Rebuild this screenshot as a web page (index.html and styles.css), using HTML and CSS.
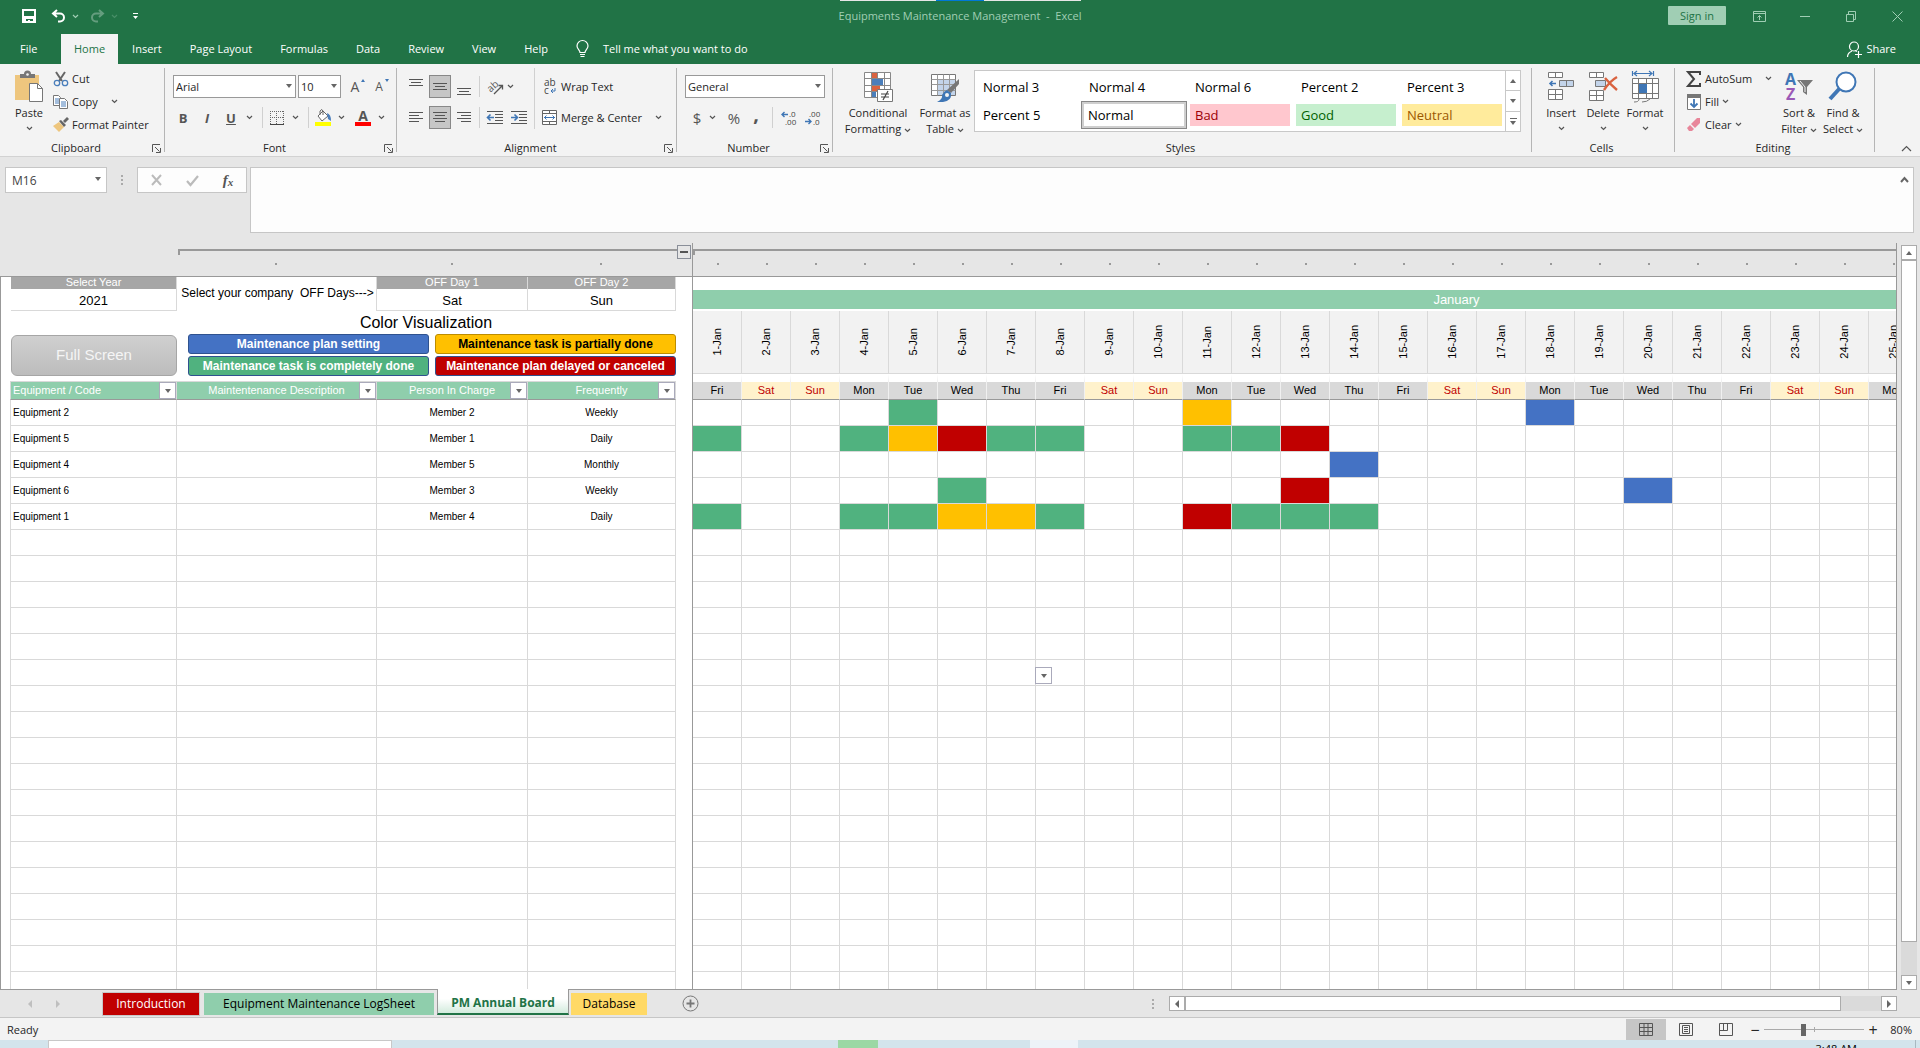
FILE: index.html
```html
<!DOCTYPE html>
<html lang="en">
<head>
    <meta charset="UTF-8">
    <title>Equipments Maintenance Management - Excel</title>
    <link rel="stylesheet" href="styles.css">
</head>
<body>
    <!-- shared symbols -->
    <svg class="sprite">
        <symbol id="chev" viewBox="0 0 7 5"><path d="M1 1l2.5 2.5L6 1" fill="none" stroke="currentColor" stroke-width="1.2"/></symbol>
        <symbol id="launch" viewBox="0 0 9 9"><path d="M.5 8V.5H8M3 3l4.5 4.5M8.5 4v4.500H4" fill="none" stroke="#555"/></symbol>
    </svg>

    <!-- title bar -->
    <header class="titlebar">
        <div class="quick">
            <button aria-label="Save"><svg width="14" height="14" viewBox="0 0 14 14"><path d="M1 1h12v12H1z" fill="none" stroke="#fff" stroke-width="2"/><path d="M1 7h12v6h-2v-3H4v3H1z" fill="#fff"/><path d="M6 11h2v3H6z" fill="#fff"/></svg></button>
            <button class="undo" aria-label="Undo"><svg width="15" height="14" viewBox="0 0 15 14"><path d="M6 1L2 4.500 6 8M2.500 4.500H9a4 4 0 010 8H7" fill="none" stroke="#fff" stroke-width="2"/></svg></button>
            <button class="drop" aria-label="Undo list"><svg class="chev"><use href="#chev"/></svg></button>
            <button class="undo dim" aria-label="Redo"><svg width="15" height="14" viewBox="0 0 15 14"><path d="M9 1l4 3.500L9 8M12.500 4.500H6a4 4 0 000 8h2" fill="none" stroke="#fff" stroke-width="2"/></svg></button>
            <button class="drop dim" aria-label="Redo list"><svg class="chev"><use href="#chev"/></svg></button>
            <button class="custom" aria-label="Customize"><svg width="5" height="6" viewBox="0 0 5 6"><path d="M0 0h5v1H0zM0 3h5L2.500 6z" fill="#fff"/></svg></button>
        </div>
        <div class="doc-title">Equipments Maintenance Management&nbsp; -&nbsp; Excel</div>
        <div class="window-buttons">
            <button class="sign-in">Sign in</button>
            <button aria-label="Ribbon display"><svg width="13" height="11" viewBox="0 0 13 11"><path d="M.5.5h12v10H.5zM.5 2.500h12M6.500 9V4.500M4.500 6.500l2-2 2 2" fill="none" stroke="#a0ceb4"/></svg></button>
            <button aria-label="Minimize"><svg width="10" height="11" viewBox="0 0 10 11"><path d="M0 5.500h10" stroke="#a0ceb4"/></svg></button>
            <button aria-label="Restore"><svg width="10" height="11" viewBox="0 0 10 11"><path d="M.5 3.500h7v7h-7zM2.500 3V.5h7v8H8" fill="none" stroke="#a0ceb4"/></svg></button>
            <button aria-label="Close"><svg width="11" height="11" viewBox="0 0 11 11"><path d="M.5.5l10 10M10.500.5l-10 10" stroke="#a0ceb4"/></svg></button>
        </div>
        <div class="top-strip"><i></i></div>
    </header>

    <nav class="tabs">
        <a href="#" class="file">File</a>
        <a href="#" class="active">Home</a>
        <a href="#">Insert</a>
        <a href="#">Page Layout</a>
        <a href="#">Formulas</a>
        <a href="#">Data</a>
        <a href="#">Review</a>
        <a href="#">View</a>
        <a href="#">Help</a>
        <a href="#" class="tell">
            <svg width="13" height="18" viewBox="0 0 13 18"><path d="M4 12.500C4 10 1 9 1 6a5.500 5.500 0 0111 0c0 3-3 4-3 6.500zM4 14.500h5M4.500 16.500h4" fill="none" stroke="#fff" stroke-width="1.2"/></svg>
            Tell me what you want to do
        </a>
        <a href="#" class="share">
            <svg width="15" height="17" viewBox="0 0 15 17"><circle cx="7" cy="5.500" r="4.500" fill="none" stroke="#fff" stroke-width="1.2"/><path d="M.5 16c0-3 2-5 4.500-6M8 9.500l2 1M8 13.500h7M11.500 10v7" fill="none" stroke="#fff" stroke-width="1.2"/></svg>
            Share
        </a>
    </nav>

    <!-- ribbon -->
    <section class="ribbon">
        <div class="group clipboard">
            <div class="tools">
                <button class="big">
                    <svg width="30" height="32" viewBox="0 0 30 32"><path d="M1 4h24v25H1z" fill="#eec67e"/><path d="M6 7V3h4a3.500 3.500 0 017 0h4v4z" fill="#777"/><circle cx="13.500" cy="3.500" r="1.300" fill="#f3f3f3"/><path d="M15.500 12.500h8l5 5v13h-13z" fill="#fff" stroke="#777"/><path d="M23.500 12.500v5h5" fill="none" stroke="#777"/></svg>
                    <span>Paste</span>
                    <svg class="chev"><use href="#chev"/></svg>
                </button>
                <div class="stack">
                    <button><svg width="16" height="16" viewBox="0 0 16 16"><path d="M3 1l6 9M12 1L6 10" stroke="#666" stroke-width="2"/><circle cx="4" cy="12" r="2.700" fill="none" stroke="#4a7ebb" stroke-width="1.300"/><circle cx="12" cy="12" r="2.700" fill="none" stroke="#4a7ebb" stroke-width="1.300"/></svg>Cut</button>
                    <button><svg width="16" height="16" viewBox="0 0 16 16"><path d="M.5 1.500h5l2 2v8h-7z" fill="#fff" stroke="#777"/><path d="M2 5h4M2 7h4M2 9h4" stroke="#4a7ebb"/><path d="M6.500 4.500h5l3 3v7h-8z" fill="#fff" stroke="#777"/><path d="M8 8h5M8 10h5M8 12h5" stroke="#4a7ebb"/></svg>Copy<svg class="chev spaced"><use href="#chev"/></svg></button>
                    <button><svg width="16" height="16" viewBox="0 0 16 16"><path d="M0 9l6-4 5 5-5 5z" fill="#eec67e"/><path d="M6 4l2-1 5 5-2 2zM10 4l4-4 2 2-4 4z" fill="#666"/></svg>Format Painter</button>
                </div>
            </div>
            <div class="caption"><span>Clipboard</span><svg class="launch"><use href="#launch"/></svg></div>
        </div>

        <div class="group font">
            <div class="tools rows">
                <div class="row">
                    <label class="combo font-name"><select aria-label="Font"><option>Arial</option></select></label>
                    <label class="combo font-size"><select aria-label="Font size"><option>10</option></select></label>
                    <button class="icon" aria-label="Increase font size"><span class="grow">A</span><i class="tri up"></i></button>
                    <button class="icon" aria-label="Decrease font size"><span class="shrink">A</span><i class="tri"></i></button>
                </div>
                <div class="row text-style">
                    <button class="icon bold">B</button>
                    <button class="icon italic">I</button>
                    <button class="icon under">U</button>
                    <svg class="chev"><use href="#chev"/></svg>
                    <i class="sep"></i>
                    <button class="icon" aria-label="Borders"><svg width="14" height="14" viewBox="0 0 14 14"><path d="M0 .5h14M0 6.500h14M.5 0v13M6.500 0v13M13.500 0v13" stroke="#666" stroke-dasharray="1 1"/><path d="M0 13.500h14" stroke="#444"/></svg></button>
                    <svg class="chev"><use href="#chev"/></svg>
                    <i class="sep"></i>
                    <button class="icon" aria-label="Fill color"><svg width="17" height="17" viewBox="0 0 17 17"><path d="M8 2l5 5-6 5-4-5z" fill="#fff" stroke="#666"/><path d="M5 6V2q2-3 3 0v4" fill="none" stroke="#666"/><path d="M12 4q4 1 4 8l-3-2z" fill="#4a7ebb"/><path d="M0 13h16v4H0z" fill="#ff0"/></svg></button>
                    <svg class="chev"><use href="#chev"/></svg>
                    <button class="icon font-color" aria-label="Font color">A</button>
                    <svg class="chev"><use href="#chev"/></svg>
                </div>
            </div>
            <div class="caption"><span>Font</span><svg class="launch"><use href="#launch"/></svg></div>
        </div>

        <div class="group align">
            <div class="tools">
                <div class="rows">
                    <div class="row">
                        <button class="toggle" aria-label="Top align"><svg width="14" height="16" viewBox="0 0 14 16"><path d="M0 .5h14M2 3.500h10M0 6.500h14" stroke="#555"/></svg></button>
                        <button class="toggle on" aria-label="Middle align"><svg width="14" height="16" viewBox="0 0 14 16"><path d="M0 4.500h14M2 7.500h10M0 10.500h14" stroke="#555"/></svg></button>
                        <button class="toggle" aria-label="Bottom align"><svg width="14" height="16" viewBox="0 0 14 16"><path d="M0 9.500h14M2 12.500h10M0 15.500h14" stroke="#555"/></svg></button>
                        <i class="sep"></i>
                        <button class="icon" aria-label="Orientation"><svg width="17" height="16" viewBox="0 0 17 16"><text x="1" y="11" font-size="10" fill="#555" transform="rotate(-42 6 9)">ab</text><path d="M7 15l8-8M11.500 6.500h4v4" fill="none" stroke="#555" stroke-width="1.300"/></svg></button>
                        <svg class="chev"><use href="#chev"/></svg>
                    </div>
                    <div class="row">
                        <button class="toggle" aria-label="Align left"><svg width="14" height="12" viewBox="0 0 14 12"><path d="M0 .5h14M0 3.500h10M0 6.500h14M0 9.500h10" stroke="#555"/></svg></button>
                        <button class="toggle on" aria-label="Center"><svg width="14" height="12" viewBox="0 0 14 12"><path d="M0 .5h14M2 3.500h10M0 6.500h14M2 9.500h10" stroke="#555"/></svg></button>
                        <button class="toggle" aria-label="Align right"><svg width="14" height="12" viewBox="0 0 14 12"><path d="M0 .5h14M4 3.500h10M0 6.500h14M4 9.500h10" stroke="#555"/></svg></button>
                        <i class="sep"></i>
                        <button class="icon" aria-label="Decrease indent"><svg width="16" height="14" viewBox="0 0 16 14"><path d="M0 .5h16M8 3.500h8M8 6.500h8M8 9.500h8M0 12.500h16" stroke="#555"/><path d="M7 6.500H1M3.500 3.500l-3 3 3 3" fill="none" stroke="#3f76b5" stroke-width="1.600"/></svg></button>
                        <button class="icon" aria-label="Increase indent"><svg width="16" height="14" viewBox="0 0 16 14"><path d="M0 .5h16M8 3.500h8M8 6.500h8M8 9.500h8M0 12.500h16" stroke="#555"/><path d="M0 6.500h6M3.500 3.500l3 3-3 3" fill="none" stroke="#3f76b5" stroke-width="1.600"/></svg></button>
                    </div>
                </div>
                <div class="rows wide">
                    <button class="row"><svg width="16" height="16" viewBox="0 0 16 16"><text x="2" y="7" font-size="10" fill="#444">ab</text><text x="2" y="15" font-size="10" fill="#444">c</text><path d="M13 9v3H9M11 10l-2 2 2 2" fill="none" stroke="#3f76b5"/></svg>Wrap Text</button>
                    <button class="row"><svg width="16" height="16" viewBox="0 0 16 16"><path d="M.5.5h14v14H.5zM.5 3.500h14M.5 11.500h14M7.500.5v3M7.500 11.500v3" fill="#fff" stroke="#666"/><path d="M2 7.500h11M4.500 5.500l-2 2 2 2M10.500 5.500l2 2-2 2" fill="none" stroke="#3f76b5"/></svg>Merge &amp; Center<svg class="chev spaced"><use href="#chev"/></svg></button>
                </div>
            </div>
            <div class="caption"><span>Alignment</span><svg class="launch"><use href="#launch"/></svg></div>
        </div>

        <div class="group number">
            <div class="tools rows">
                <div class="row"><label class="combo format"><select aria-label="Number format"><option>General</option></select></label></div>
                <div class="row">
                    <button class="icon symbol">$</button>
                    <svg class="chev"><use href="#chev"/></svg>
                    <button class="icon symbol">%</button>
                    <button class="icon symbol comma">,</button>
                    <i class="sep"></i>
                    <button class="icon" aria-label="Increase decimal"><svg width="16" height="14" viewBox="0 0 16 14"><text x="8" y="6" font-size="8" fill="#444">.0</text><text x="4" y="14" font-size="8" fill="#444">.00</text><path d="M7 3.500H1M3.500 1L1 3.500 3.500 6" fill="none" stroke="#3f76b5" stroke-width="1.400"/></svg></button>
                    <button class="icon" aria-label="Decrease decimal"><svg width="16" height="14" viewBox="0 0 16 14"><text x="4" y="6" font-size="8" fill="#444">.00</text><text x="8" y="14" font-size="8" fill="#444">.0</text><path d="M0 10.500h6M3.500 8L6 10.500 3.500 13" fill="none" stroke="#3f76b5" stroke-width="1.400"/></svg></button>
                </div>
            </div>
            <div class="caption"><span>Number</span><svg class="launch"><use href="#launch"/></svg></div>
        </div>

        <div class="group styles">
            <div class="tools">
                <button class="big cond">
                    <svg width="30" height="32" viewBox="0 0 30 32"><path d="M1.500 1.500h26v25h-26zM1.500 7.500h26M1.500 14.500h26M1.500 20.500h26M8.500 1.500v25M14.500 1.500v25M21.500 1.500v25" fill="#fff" stroke="#888"/><path d="M9 2h5v5H9zM9 15h8v5H9z" fill="#d9623f"/><path d="M9 8h11v6H9zM9 21h4v5H9z" fill="#4a7ebb"/><path d="M14.500 18.500h15v12h-15z" fill="#fff" stroke="#777"/><path d="M18 23h8M18 26h8M25 20l-5 9" stroke="#444" stroke-width="1.2"/></svg>
                    <span>Conditional</span>
                    <span>Formatting <svg class="chev"><use href="#chev"/></svg></span>
                </button>
                <button class="big fmt">
                    <svg width="30" height="32" viewBox="0 0 30 32"><path d="M1.500 3.500h24v21h-24z" fill="#fff" stroke="#777"/><path d="M8 9h17v15H8z" fill="#c3d4ea"/><path d="M1.500 8.500h24M1.500 13.500h24M1.500 19.500h24M7.500 3.500v21M13.500 3.500v21M19.500 3.500v21" stroke="#999"/><path d="M29 8v5l-8 9-4-3z" fill="#777"/><path d="M17 19l4 3q1 8-8 9H7q6-3 5-7 2-4 5-5z" fill="#3f76b5"/><circle cx="17" cy="24" r="2" fill="#f3f3f3"/></svg>
                    <span>Format as</span>
                    <span>Table <svg class="chev"><use href="#chev"/></svg></span>
                </button>
                <div class="gallery">
                    <div class="swatches">
                        <button>Normal 3</button><button>Normal 4</button><button>Normal 6</button><button>Percent 2</button><button>Percent 3</button>
                        <button>Percent 5</button><button class="current">Normal</button><button class="bad">Bad</button><button class="good">Good</button><button class="neutral">Neutral</button>
                    </div>
                    <div class="gallery-nav">
                        <button aria-label="Previous"><i class="tri up"></i></button>
                        <button aria-label="Next"><i class="tri"></i></button>
                        <button class="more" aria-label="More"><i class="tri"></i></button>
                    </div>
                </div>
            </div>
            <div class="caption"><span>Styles</span></div>
        </div>

        <div class="group cells">
            <div class="tools">
                <button class="big">
                    <svg width="28" height="32" viewBox="0 0 28 32"><path d="M1.500 1.500h14v5h-14zM8.500 1.500v5M1.500 18.500h14v10h-14zM8.500 18.500v10M1.500 23.500h14" fill="#fff" stroke="#777"/><path d="M12.500 9.500h14v6h-14zM19.500 9.500v6" fill="#c3d4ea" stroke="#777"/><path d="M9 12.500H3M5.500 10L3 12.500 5.500 15" fill="none" stroke="#3f76b5" stroke-width="1.600"/></svg>
                    <span>Insert</span><svg class="chev"><use href="#chev"/></svg>
                </button>
                <button class="big">
                    <svg width="30" height="32" viewBox="0 0 30 32"><path d="M1.500 1.500h14v5h-14zM8.500 1.500v5M1.500 19.500h14v10h-14zM8.500 19.500v10M1.500 24.500h14" fill="#fff" stroke="#777"/><path d="M7.500 9.500h10v6h-10z" fill="#c3d4ea" stroke="#777"/><path d="M17 7q5 6 12 12M29 6q-7 4-13 13" fill="none" stroke="#d9623f" stroke-width="2.400"/></svg>
                    <span>Delete</span><svg class="chev"><use href="#chev"/></svg>
                </button>
                <button class="big">
                    <svg width="28" height="32" viewBox="0 0 28 32"><path d="M1.500 7.500h26v20h-26zM7.500 7.500v20M15.500 7.500v20M21.500 7.500v20M1.500 12.500h26M1.500 22.500h26M3 31q5 0 5-3M11 31q5 0 8-3" fill="#fff" stroke="#777"/><path d="M8 13h8v9H8z" fill="#3f76b5"/><path d="M1.500 0v5M22.500 0v5M3 2.500h18M6 0L3 2.500 6 5M18 0l3 2.500L18 5" fill="none" stroke="#3f76b5" stroke-width="1.2"/></svg>
                    <span>Format</span><svg class="chev"><use href="#chev"/></svg>
                </button>
            </div>
            <div class="caption"><span>Cells</span></div>
        </div>

        <div class="group editing">
            <div class="tools">
                <div class="stack">
                    <button><svg width="16" height="16" viewBox="0 0 16 16"><path d="M14 4V1H2l6 7-6 7h12v-3" fill="none" stroke="#444" stroke-width="2"/></svg>AutoSum<svg class="chev spaced"><use href="#chev"/></svg></button>
                    <button><svg width="16" height="16" viewBox="0 0 16 16"><path d="M1.500.5h13v15h-13z" fill="#fff" stroke="#777"/><path d="M1 0h14v4H1z" fill="#777"/><path d="M8 5v8M4.500 9.500L8 13l3.500-3.500" fill="none" stroke="#3f76b5" stroke-width="1.800"/></svg>Fill <svg class="chev"><use href="#chev"/></svg></button>
                    <button><svg width="16" height="16" viewBox="0 0 16 16"><path d="M5 7l6-6h3v5L9 11z" fill="#e8869a"/><path d="M4 8l4 4-2 2H3l-2-3z" fill="#e8869a"/></svg>Clear <svg class="chev"><use href="#chev"/></svg></button>
                </div>
                <button class="big">
                    <svg width="30" height="32" viewBox="0 0 30 32"><text x="1" y="14" font-size="16" font-weight="bold" fill="#3f76b5">A</text><text x="2" y="29" font-size="16" font-weight="bold" fill="#9b59b6">Z</text><path d="M13 9h16l-6 7v8l-4-3v-5z" fill="#777"/><path d="M16 10l5 6v5" fill="none" stroke="#f3f3f3"/></svg>
                    <span>Sort &amp;</span>
                    <span>Filter <svg class="chev"><use href="#chev"/></svg></span>
                </button>
                <button class="big">
                    <svg width="30" height="32" viewBox="0 0 30 32"><path d="M12 17L2 28" stroke="#3f76b5" stroke-width="4"/><circle cx="18" cy="11" r="9.500" fill="#fff" stroke="#3f76b5" stroke-width="2"/></svg>
                    <span>Find &amp;</span>
                    <span>Select <svg class="chev"><use href="#chev"/></svg></span>
                </button>
            </div>
            <div class="caption"><span>Editing</span></div>
        </div>
        <button class="collapse" aria-label="Collapse ribbon"><svg width="11" height="7" viewBox="0 0 11 7"><path d="M1 6l4.500-4.500L10 6" fill="none" stroke="#555" stroke-width="1.2"/></svg></button>
    </section>

    <!-- formula bar -->
    <section class="formula-bar">
        <label class="combo name-box"><input type="text" value="M16" aria-label="Name box"></label>
        <div class="dots"><i></i><i></i><i></i></div>
        <div class="formula-buttons">
            <button aria-label="Cancel"><svg width="11" height="10" viewBox="0 0 11 10"><path d="M1 0l9 10M10 0L1 10" stroke="#bbb" stroke-width="2"/></svg></button>
            <button aria-label="Enter"><svg width="13" height="11" viewBox="0 0 13 11"><path d="M1 6l3.500 4L12 1" fill="none" stroke="#bbb" stroke-width="2.200"/></svg></button>
            <button class="fx" aria-label="Insert function">f<small>x</small></button>
        </div>
        <div class="formula-input">
            <textarea aria-label="Formula"></textarea>
            <svg width="7" height="5" viewBox="0 0 7 5"><path d="M0 5l3.500-4L7 5" fill="none" stroke="#666" stroke-width="2"/></svg>
        </div>
    </section>

    <!-- worksheet -->
    <main class="workbook">
        <div class="panes">
            <div class="pane left">
                <div class="outline">
                    <div class="bracket"></div>
                    <div class="ticks"><i></i><i></i><i></i></div>
                    <button aria-label="Collapse columns"></button>
                </div>
                <div class="frozen">
                    <div class="settings">
                        <div class="field"><b>Select Year</b><span>2021</span></div>
                        <div class="hint">Select your company&nbsp; OFF Days---&gt;</div>
                        <div class="field"><b>OFF Day 1</b><span>Sat</span></div>
                        <div class="field"><b>OFF Day 2</b><span>Sun</span></div>
                    </div>
                    <div class="visual">
                        <button class="full-screen">Full Screen</button>
                        <div class="legend">
                            <h2>Color Visualization</h2>
                            <span class="plan">Maintenance plan setting</span>
                            <span class="partial">Maintenance task is partially done</span>
                            <span class="done">Maintenance task is completely done</span>
                            <span class="late">Maintenance plan delayed or canceled</span>
                        </div>
                    </div>
                </div>
                <table class="equipment">
                    <thead>
                        <tr>
                            <th class="c1">Equipment / Code<button aria-label="Filter"><i class="tri"></i></button></th>
                            <th class="c2">Maintentenance Description<button aria-label="Filter"><i class="tri"></i></button></th>
                            <th class="c3">Person In Charge<button aria-label="Filter"><i class="tri"></i></button></th>
                            <th class="c4">Frequently<button aria-label="Filter"><i class="tri"></i></button></th>
                        </tr>
                    </thead>
                    <tbody id="equipment"></tbody>
                </table>
            </div>
            <div class="pane right">
                <div class="outline">
                    <div class="bracket"></div>
                    <div class="ticks" id="ticks"></div>
                </div>
                <table class="calendar">
                    <thead>
                        <tr class="month"><th colspan="31">January</th></tr>
                        <tr class="dates" id="dates"></tr>
                        <tr class="days" id="days"></tr>
                    </thead>
                    <tbody id="calendar"></tbody>
                </table>
            </div>
        </div>
        <div class="scroll vertical">
            <button aria-label="Scroll up"><i class="tri up"></i></button>
            <div class="thumb"></div>
            <div class="track"></div>
            <button aria-label="Scroll down"><i class="tri"></i></button>
        </div>
    </main>

    <!-- sheet tabs -->
    <nav class="sheets">
        <div class="sheet-nav">
            <button aria-label="Previous sheet"><i class="tri prev"></i></button>
            <button aria-label="Next sheet"><i class="tri next"></i></button>
        </div>
        <a href="#" class="intro">Introduction</a>
        <a href="#" class="log">Equipment Maintenance LogSheet</a>
        <a href="#" class="board">PM Annual Board</a>
        <a href="#" class="data">Database</a>
        <button class="add" aria-label="New sheet"><svg width="17" height="17" viewBox="0 0 17 17"><circle cx="8.500" cy="8.500" r="7.500" fill="none" stroke="#777"/><path d="M8.500 4.500v8M4.500 8.500h8" stroke="#777" stroke-width="1.800"/></svg></button>
        <div class="dots"><i></i><i></i><i></i></div>
        <div class="scroll horizontal">
            <button aria-label="Scroll left"><i class="tri prev"></i></button>
            <div class="thumb"></div>
            <div class="track"></div>
            <button aria-label="Scroll right"><i class="tri next"></i></button>
        </div>
    </nav>

    <footer class="status">
        <span>Ready</span>
        <div class="views">
            <button class="on" aria-label="Normal view"><svg width="14" height="13" viewBox="0 0 14 13"><path d="M.5.5h13v12H.5zM.5 4.500h13M.5 8.500h13M5 .5v12M9 .5v12" fill="none" stroke="#555"/></svg></button>
            <button aria-label="Page layout view"><svg width="14" height="13" viewBox="0 0 14 13"><path d="M.5.5h13v12H.5zM3.500 2.500h7v8h-7zM5 4.500h4M5 6.500h4M5 8.500h4" fill="none" stroke="#555"/></svg></button>
            <button aria-label="Page break view"><svg width="14" height="13" viewBox="0 0 14 13"><path d="M.5.5h13v12H.5zM.5 7.500h8v-7M4.500.5v7" fill="none" stroke="#555"/></svg></button>
        </div>
        <div class="zoom">
            <button aria-label="Zoom out">−</button>
            <input type="range" min="0" max="100" value="39" aria-label="Zoom">
            <button aria-label="Zoom in">+</button>
            <span>80%</span>
        </div>
    </footer>
    <div class="taskbar">
        <div class="search"></div>
        <div class="app green"></div>
        <div class="app pale"></div>
        <div class="clock">3:48 AM</div>
    </div>

    <script>
        const DAYS = 31;
        const ROWS = 40;
        const names = ['Fri', 'Sat', 'Sun', 'Mon', 'Tue', 'Wed', 'Thu'];

        // marks: day of month -> state of the maintenance task
        const equipment = [
            { code: 'Equipment 2', person: 'Member 2', freq: 'Weekly', marks: { 5: 'done', 11: 'partial', 18: 'plan' } },
            { code: 'Equipment 5', person: 'Member 1', freq: 'Daily', marks: { 1: 'done', 4: 'done', 5: 'partial', 6: 'late', 7: 'done', 8: 'done', 11: 'done', 12: 'done', 13: 'late' } },
            { code: 'Equipment 4', person: 'Member 5', freq: 'Monthly', marks: { 14: 'plan' } },
            { code: 'Equipment 6', person: 'Member 3', freq: 'Weekly', marks: { 6: 'done', 13: 'late', 20: 'plan' } },
            { code: 'Equipment 1', person: 'Member 4', freq: 'Daily', marks: { 1: 'done', 4: 'done', 5: 'done', 6: 'partial', 7: 'partial', 8: 'done', 11: 'late', 12: 'done', 13: 'done', 14: 'done' } }
        ];

        let ticks = '', dates = '', days = '';
        for (let d = 1; d <= DAYS; d++) {
            const name = names[(d - 1) % 7];
            const off = name === 'Sat' || name === 'Sun';
            ticks += '<i></i>';
            dates += `<th><span>${d}-Jan</span></th>`;
            days += `<th class="${off ? 'off' : ''}">${name}</th>`;
        }
        document.getElementById('ticks').innerHTML = ticks;
        document.getElementById('dates').innerHTML = dates;
        document.getElementById('days').innerHTML = days;

        let left = '', right = '';
        for (let r = 0; r < ROWS; r++) {
            const item = equipment[r] || { code: '', person: '', freq: '', marks: {} };
            left += `<tr><td>${item.code}</td><td></td><td>${item.person}</td><td>${item.freq}</td></tr>`;
            right += '<tr>';
            for (let d = 1; d <= DAYS; d++) {
                // list button of the selected cell M16
                const list = r === 10 && d === 7 ? '<button class="cell-list" aria-label="Open list"><i class="tri"></i></button>' : '';
                right += `<td class="${item.marks[d] || ''}">${list}</td>`;
            }
            right += '</tr>';
        }
        document.getElementById('equipment').innerHTML = left;
        document.getElementById('calendar').innerHTML = right;
    </script>
</body>
</html>
```
FILE: styles.css
```css
* {
    box-sizing: border-box;
}
body {
    margin: 0;
    height: 100vh;
    display: flex;
    flex-direction: column;
    overflow: hidden;
    background: #e6e6e6;
    color: #262626;
    font-family: "Open Sans", "Noto Sans", sans-serif;
    font-size: 11px;
    line-height: 16px;
}
button {
    margin: 0;
    padding: 0;
    border: none;
    background: none;
    color: inherit;
    font: inherit;
    display: flex;
    align-items: center;
    justify-content: center;
    white-space: nowrap;
}
svg {
    flex: none;
    overflow: visible;
}
a {
    color: inherit;
    text-decoration: none;
    white-space: nowrap;
}
.sprite {
    position: absolute;
    width: 0;
    height: 0;
}
.chev {
    width: 7px;
    height: 5px;
    color: #555;
}
.chev.spaced {
    margin-left: 10px;
}
.launch {
    width: 9px;
    height: 9px;
}

/* small triangles */
.tri {
    width: 0;
    height: 0;
    border: 3px solid transparent;
    border-top: 4px solid #666;
    border-bottom: none;
}
.tri.up {
    border-top: none;
    border-bottom: 4px solid #666;
}
.tri.prev {
    border: 4px solid transparent;
    border-right-color: #666;
    border-left: none;
}
.tri.next {
    border: 4px solid transparent;
    border-left-color: #666;
    border-right: none;
}
.dots {
    display: flex;
    flex-direction: column;
    gap: 2px;
}
.dots i {
    width: 2px;
    height: 2px;
    background: #aaa;
}

/* title bar */
.titlebar {
    position: relative;
    flex: none;
    height: 34px;
    padding: 0 0 2px 14px;
    display: grid;
    grid-template-columns: 1fr auto 1fr;
    align-items: center;
    background: #217346;
    color: #a0ceb4;
}
.doc-title {
    margin-left: -14px;
}
.quick {
    display: flex;
    align-items: center;
}
.quick button {
    width: 30px;
    height: 24px;
    color: #fff;
}
.quick .undo {
    width: 28px;
}
.quick .drop {
    width: 7px;
    margin-right: 4px;
}
.quick .drop .chev {
    color: #a0ceb4;
}
.quick .dim {
    opacity: 0.3;
}
.quick .custom {
    width: 26px;
}
.window-buttons {
    display: flex;
    justify-content: flex-end;
}
.window-buttons button {
    width: 46px;
    height: 30px;
}
.window-buttons .sign-in {
    width: 58px;
    height: 19px;
    margin: 5px 10px 0 0;
    background: #a0ceb4;
    color: #217346;
    border-radius: 1px;
}
.top-strip {
    position: absolute;
    top: 0;
    left: 50%;
    width: 241px;
    height: 1px;
    margin-left: -120px;
    background: #e6e6e6;
}
.top-strip i {
    display: block;
    width: 48px;
    height: 1px;
    margin-left: 96px;
    background: #0078d7;
}

/* ribbon tabs */
.tabs {
    flex: none;
    height: 30px;
    display: flex;
    background: #217346;
    color: #fff;
}
.tabs a {
    height: 30px;
    padding: 0 14px;
    display: flex;
    align-items: center;
}
.tabs .file {
    width: 61px;
    padding-left: 20px;
}
.tabs .active {
    padding: 0 13px;
    background: #f3f3f3;
    color: #217346;
}
.tabs .tell {
    gap: 14px;
}
.tabs .share {
    margin-left: auto;
    padding-right: 24px;
    gap: 4px;
}

/* ribbon */
.ribbon {
    flex: none;
    height: 93px;
    padding: 4px 0;
    display: flex;
    background: #f3f3f3;
    border-bottom: 1px solid #d2d2d2;
}
.group {
    flex: none;
    display: flex;
    flex-direction: column;
    justify-content: space-between;
    border-right: 1px solid #b5b5b5;
}
.tools {
    display: flex;
}
.caption {
    height: 16px;
    margin-bottom: -4px;
    padding-right: 3px;
    display: flex;
    align-items: center;
}
.caption span {
    flex: 1;
    text-align: center;
}
.clipboard {
    width: 165px;
}
.font {
    width: 232px;
}
.align {
    width: 280px;
}
.number {
    width: 156px;
}
.styles {
    flex: 1;
}
.cells {
    width: 143px;
}
.editing {
    width: 200px;
}
.big {
    flex-direction: column;
    justify-content: flex-start;
    padding-top: 3px;
}
.big span {
    display: block;
    line-height: 16px;
    margin-top: 2px;
}
.big span + span {
    margin-top: 0;
}
.big > .chev {
    margin-top: 5px;
}
.clipboard .big {
    width: 40px;
    margin-left: 9px;
}
.stack {
    margin-top: -1px;
    display: flex;
    flex-direction: column;
    align-items: flex-start;
}
.stack button {
    height: 23px;
    gap: 3px;
}
.clipboard .stack {
    padding-left: 4px;
}
.rows {
    display: flex;
    flex-direction: column;
    gap: 8px;
    padding-top: 7px;
}
.row {
    height: 23px;
    display: flex;
    align-items: center;
}
.icon {
    position: relative;
    width: 24px;
    height: 23px;
    color: #555;
}
.sep {
    width: 1px;
    height: 21px;
    background: #d0d0d0;
}
.combo {
    position: relative;
    display: flex;
}
.combo::after {
    content: "";
    position: absolute;
    right: 4px;
    top: 9px;
    border: 3px solid transparent;
    border-top: 4px solid #666;
    border-bottom: none;
}
.combo select,
.combo input {
    appearance: none;
    width: 100%;
    height: 23px;
    margin: 0;
    padding: 0 2px;
    border: 1px solid #999;
    border-radius: 0;
    background: #fff;
    color: #262626;
    font: inherit;
}

/* font */
.font .tools {
    padding-left: 8px;
}
.font-name {
    width: 123px;
    margin-right: 2px;
}
.font-size {
    width: 43px;
    margin-right: 2px;
}
.grow {
    font-size: 14px;
}
.shrink {
    font-size: 12px;
}
.icon .tri {
    position: absolute;
    top: 4px;
    right: 2px;
    border-width: 2px;
    border-top: 3px solid #3f76b5;
    border-bottom: none;
}
.icon .tri.up {
    border-top: none;
    border-bottom: 3px solid #3f76b5;
}
.text-style {
    margin-left: -2px;
}
.bold {
    font-size: 13px;
    font-weight: bold;
}
.italic {
    font-size: 13px;
    font-weight: bold;
    font-style: italic;
}
.under {
    font-size: 13px;
    font-weight: bold;
    text-decoration: underline;
}
.font .row .sep {
    margin: 0 2px 0 6px;
}
.font .chev {
    margin: 0 3px;
}
.font-color {
    height: 16px;
    width: 16px;
    margin: 0 4px 0 7px;
    border-bottom: 4px solid #f00;
    font-size: 14px;
    font-weight: bold;
    line-height: 12px;
}

/* alignment */
.align .rows {
    padding-left: 8px;
}
.toggle {
    width: 22px;
    height: 23px;
    margin-right: 2px;
    border: 1px solid transparent;
}
.toggle.on {
    background: #c6c6c6;
    border-color: #888;
}
.align .row .sep {
    margin: 0 3px 0 2px;
}
.align .rows.wide {
    margin-left: 3px;
    padding-left: 7px;
    border-left: 1px solid #d0d0d0;
}
.wide .row {
    justify-content: flex-start;
    gap: 3px;
}

/* number */
.number .rows {
    padding-left: 8px;
}
.format {
    width: 140px;
}
.symbol {
    font-size: 15px;
}
.comma {
    width: 20px;
    padding-bottom: 8px;
    font-size: 20px;
    font-weight: bold;
}
.number .sep {
    margin: 0 4px 0 6px;
}
.number .chev + .symbol {
    margin-left: 6px;
}

/* styles */
.cond {
    width: 76px;
    margin-left: 7px;
}
.fmt {
    width: 58px;
}
.gallery {
    flex: 1;
    height: 62px;
    margin: 2px 10px 0 0;
    display: flex;
    background: #fff;
    border: 1px solid #c8c8c8;
}
.swatches {
    flex: 1;
    display: grid;
    grid-template-columns: repeat(5, 1fr);
    grid-template-rows: 28px 28px;
    align-content: center;
}
.swatches button {
    margin: 3px;
    padding-left: 5px;
    justify-content: flex-start;
    color: #000;
    font-size: 13px;
}
.swatches .current {
    margin: 0;
    padding-left: 6px;
    border: 1px solid #888;
    outline: 2px solid #cfcfcf;
    outline-offset: -3px;
}
.swatches .bad {
    background: #ffc7ce;
    color: #9c0006;
}
.swatches .good {
    background: #c6efce;
    color: #006100;
}
.swatches .neutral {
    background: #ffeb9c;
    color: #9c5700;
}
.gallery-nav {
    width: 15px;
    display: flex;
    flex-direction: column;
    border-left: 1px solid #c8c8c8;
}
.gallery-nav button {
    flex: 1;
}
.gallery-nav button + button {
    border-top: 1px solid #c8c8c8;
}
.more {
    flex-direction: column;
    gap: 2px;
}
.more::before {
    content: "";
    width: 7px;
    height: 1px;
    background: #666;
}

/* cells and editing */
.cells .big {
    width: 42px;
}
.cells .tools {
    padding-left: 8px;
}
.editing .stack {
    width: 102px;
    padding-left: 11px;
}
.editing .big {
    width: 44px;
}
.collapse {
    width: 45px;
    padding-right: 8px;
    align-items: flex-end;
    justify-content: flex-end;
}

/* formula bar */
.formula-bar {
    flex: none;
    height: 86px;
    padding: 10px 6px 10px 5px;
    display: flex;
    align-items: flex-start;
}
.name-box {
    width: 102px;
}
.combo.name-box input {
    height: 26px;
    padding-left: 6px;
    border-color: #c6c6c6;
    font-size: 12px;
    color: #444;
}
.combo.name-box::after {
    right: 6px;
    top: 10px;
}
.formula-bar .dots {
    margin: 8px 14px 0;
}
.formula-buttons {
    width: 110px;
    height: 26px;
    margin-right: 3px;
    display: flex;
    background: #fdfdfd;
    border: 1px solid #c6c6c6;
}
.formula-buttons button {
    flex: 1;
}
.fx {
    font-family: "Liberation Serif", serif;
    font-style: italic;
    font-weight: bold;
    font-size: 15px;
    color: #555;
}
.fx small {
    font-size: 11px;
    padding-top: 3px;
}
.formula-input {
    flex: 1;
    height: 66px;
    padding: 9px 5px 0 0;
    display: flex;
    background: #fdfdfd;
    border: 1px solid #c6c6c6;
}
.formula-input textarea {
    flex: 1;
    height: 50px;
    padding: 0;
    border: none;
    background: none;
    resize: none;
}

/* worksheet */
.workbook {
    flex: 1;
    min-height: 0;
    display: flex;
    gap: 4px;
    padding-right: 3px;
}
.panes {
    flex: 1;
    min-width: 0;
    display: flex;
    border-bottom: 1px solid #999;
    font-family: "Liberation Sans", Arial, sans-serif;
}
.pane {
    overflow: hidden;
    border-right: 1px solid #999;
}
.left {
    flex: none;
    width: 693px;
}
.right {
    flex: 1;
    min-width: 0;
}
.outline {
    position: relative;
    height: 34px;
    padding-top: 6px;
    border-bottom: 1px solid #999;
    background: #e6e6e6;
}
.outline .bracket {
    height: 6px;
    border-top: 2px solid #999;
    border-left: 2px solid #999;
}
.left .bracket {
    margin: 0 15px 0 178px;
}
.outline .ticks {
    display: flex;
    padding-top: 8px;
}
.ticks i {
    flex: none;
    width: 49px;
    height: 2px;
    background: linear-gradient(#999, #999) center / 2px 2px no-repeat;
}
.left .ticks {
    padding-left: 176px;
}
.left .ticks i:nth-child(1) {
    width: 200px;
}
.left .ticks i:nth-child(2) {
    width: 151px;
}
.left .ticks i:nth-child(3) {
    width: 148px;
}
.outline button {
    position: absolute;
    right: 1px;
    top: 2px;
    width: 14px;
    height: 14px;
    border: 1px solid #8a8f99;
    background: #e6e6e6;
}
.outline button::before {
    content: "";
    width: 8px;
    height: 2px;
    background: #555;
}
.frozen {
    height: 104px;
    padding-left: 10px;
    background: #fff;
    border-left: 1px solid #999;
}
.settings {
    display: grid;
    grid-template-columns: 166px 200px 151px 148px;
}
.field {
    border-right: 1px solid #d9d9d9;
    border-bottom: 1px solid #d9d9d9;
    text-align: center;
}
.field b {
    display: block;
    height: 12px;
    line-height: 11px;
    background: #a6a6a6;
    color: #fff;
    font-weight: normal;
}
.field span {
    display: block;
    height: 21px;
    line-height: 23px;
    font-size: 13px;
    color: #000;
}
.hint {
    padding-left: 2px;
    line-height: 32px;
    font-size: 12px;
    text-align: center;
    white-space: nowrap;
    color: #000;
    border-right: 1px solid #d9d9d9;
}
.visual {
    display: flex;
    align-items: flex-end;
}
.full-screen {
    width: 166px;
    height: 41px;
    padding-bottom: 2px;
    border: 1px solid #a6a6a6;
    border-radius: 6px;
    background: linear-gradient(#d0d0d0, #bcbcbc);
    color: #f5f5f5;
    font-size: 15px;
}
.legend {
    width: 488px;
    margin-left: 11px;
    display: grid;
    grid-template-columns: 1fr 1fr;
    gap: 2px 6px;
}
.legend h2 {
    grid-column: 1 / 3;
    height: 21px;
    margin: 0;
    padding-right: 12px;
    line-height: 24px;
    font-size: 16px;
    font-weight: normal;
    text-align: center;
    color: #000;
}
.legend span {
    height: 20px;
    line-height: 18px;
    border: 1px solid #2f528f;
    border-radius: 3px;
    color: #fff;
    font-size: 12px;
    font-weight: bold;
    text-align: center;
}
.plan {
    background: #4472c4;
}
.done {
    background: #50b27f;
}
.late {
    background: #c00000;
}
.partial {
    background: #ffc000;
}
.legend .partial {
    border-color: #bc8c00;
    color: #000;
}

table {
    border-collapse: separate;
    border-spacing: 0;
    table-layout: fixed;
    background: #fff;
    color: #000;
}
th {
    padding: 0;
    font-weight: normal;
}
td {
    height: 26px;
    padding: 0;
    border-right: 1px solid #d9d9d9;
    border-bottom: 1px solid #d9d9d9;
    text-align: center;
}
.equipment {
    width: 692px;
    border-left: 1px solid #999;
    padding-right: 16px;
    padding-left: 9px;
    font-size: 10px;
}
.equipment th {
    position: relative;
    height: 19px;
    padding-bottom: 1px;
    background: #8fceac;
    color: #fff;
    font-size: 11px;
    line-height: 15px;
    border-right: 1px solid #d9d9d9;
    border-top: 1px solid #d9d9d9;
    border-bottom: 1px solid #999;
}
.equipment th button {
    position: absolute;
    right: 0;
    top: 0;
    width: 17px;
    height: 17px;
    background: #fff;
    border: 1px solid #aab;
}
.equipment .c1 {
    width: 167px;
}
.equipment .c2 {
    width: 200px;
}
.equipment .c3 {
    width: 151px;
}
.equipment .c4 {
    width: 148px;
}
.equipment tr > :first-child {
    padding-left: 2px;
    text-align: left;
    border-left: 1px solid #d9d9d9;
}
.calendar {
    width: 1519px;
    font-size: 11px;
}
.month th {
    height: 34px;
    padding-left: 8px;
    border-top: 13px solid #fff;
    border-bottom: 2px solid #fff;
    background: #8fceac;
    color: #fff;
    font-size: 13px;
}
.dates th {
    width: 49px;
    height: 63px;
    background: #f2f2f2;
    border-right: 1px solid #d9d9d9;
    border-bottom: 1px solid #d9d9d9;
}
.dates span {
    display: block;
    margin: 0 auto;
    width: 16px;
    writing-mode: vertical-rl;
    transform: rotate(180deg);
}
.days th {
    height: 26px;
    border-top: 8px solid #fff;
    border-right: 1px solid #f0f0f0;
    border-bottom: 1px solid #999;
    background: #d9d9d9;
    line-height: 17px;
}
.days .off {
    background: #fff2cc;
    color: #c00000;
}
.calendar td {
    position: relative;
}
.cell-list {
    position: absolute;
    left: 100%;
    bottom: 1px;
    z-index: 1;
    width: 17px;
    height: 17px;
    background: #fff;
    border: 1px solid #aab;
}

/* scroll bars */
.scroll {
    display: flex;
}
.scroll button {
    flex: none;
    width: 16px;
    height: 15px;
    background: #fff;
    border: 1px solid #ababab;
}
.scroll .thumb {
    background: #fff;
    border: 1px solid #ababab;
}
.scroll .track {
    background: #dadada;
}
.vertical {
    width: 16px;
    margin-top: 2px;
    flex-direction: column;
}
.vertical .thumb {
    flex: 1;
}
.vertical .track {
    height: 33px;
}
.horizontal {
    width: 728px;
    height: 15px;
}
.horizontal .thumb {
    flex: 1;
}
.horizontal .track {
    width: 40px;
}

/* sheet tabs */
.sheets {
    flex: none;
    height: 28px;
    padding-right: 23px;
    display: flex;
    align-items: center;
    border-bottom: 1px solid #c6c6c6;
    font-size: 12px;
}
.sheet-nav {
    width: 100px;
    padding-left: 16px;
    display: flex;
}
.sheet-nav button {
    width: 28px;
    opacity: 0.3;
}
.sheets a {
    height: 22px;
    margin-left: 3px;
    line-height: 22px;
    text-align: center;
    color: #000;
}
.sheets .intro {
    width: 96px;
    background: #c00000;
    color: #fff;
    outline: 1px solid #c8c8c8;
}
.sheets .log {
    width: 230px;
    margin-left: 5px;
    background: #8fceac;
}
.sheets .board {
    align-self: flex-start;
    width: 132px;
    height: 26px;
    margin-top: -1px;
    padding-top: 3px;
    background: linear-gradient(#fff 40%, #d3ebdd);
    border: 1px solid #999;
    border-top: none;
    border-bottom: 2px solid #217346;
    color: #217346;
    font-weight: bold;
}
.sheets .data {
    width: 76px;
    margin-left: 2px;
    background: #ffd966;
}
.add {
    margin: 0 auto 0 35px;
}
.sheets .dots {
    margin-right: 15px;
}

/* status bar */
.status {
    flex: none;
    height: 22px;
    padding: 1px 8px 0 7px;
    display: flex;
    align-items: center;
    background: #f3f3f3;
}
.views {
    margin-left: auto;
    display: flex;
}
.views button {
    width: 40px;
    height: 21px;
}
.views .on {
    background: #c6c6c6;
}
.zoom {
    display: flex;
    align-items: center;
}
.zoom button {
    width: 18px;
    font-size: 16px;
}
.zoom input {
    appearance: none;
    width: 100px;
    height: 12px;
    margin: 0;
    background: linear-gradient(#aaa, #aaa) center / 100% 1px no-repeat, linear-gradient(#aaa, #aaa) center / 1px 5px no-repeat;
}
.zoom input::-webkit-slider-thumb {
    appearance: none;
    width: 5px;
    height: 12px;
    background: #666;
}
.zoom span {
    width: 30px;
    text-align: right;
}

/* top edge of the taskbar */
.taskbar {
    flex: none;
    height: 8px;
    overflow: hidden;
    display: flex;
    background: #d3e4ec;
}
.taskbar::after {
    content: "";
    width: 1px;
    margin-right: 4px;
    background: #a8b8c0;
}
.search {
    width: 344px;
    margin-left: 48px;
    background: #fff;
    border: 1px solid #c8c8c8;
    border-bottom: none;
}
.green {
    width: 40px;
    margin-left: 446px;
    background: #9bd8a4;
}
.pale {
    width: 48px;
    margin-left: 152px;
    background: #edf3f8;
}
.clock {
    margin-left: auto;
    margin-right: 58px;
    padding-top: 1px;
    color: #000;
}
```
